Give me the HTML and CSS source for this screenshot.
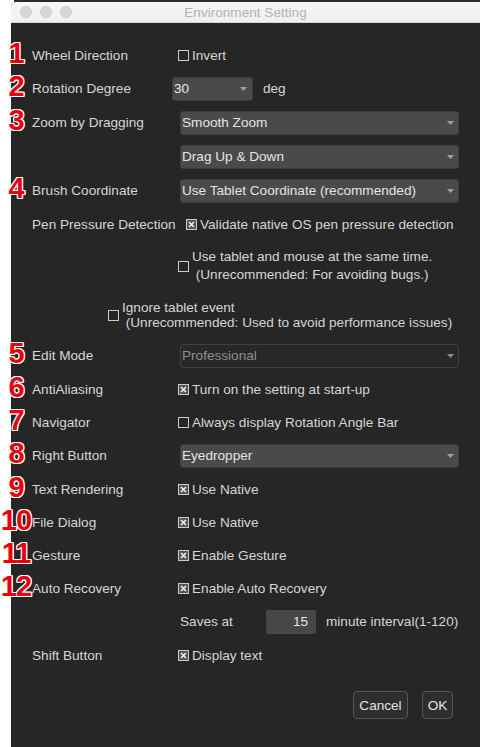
FILE: index.html
```html
<!DOCTYPE html>
<html lang="en">
  <head>
    <meta name="viewport" content="width=device-width, initial-scale=1.0">
    <link rel="stylesheet" href="styles.css">
  </head>
  <body>
    <div class="backdrop"></div>
    <div class="window">
      <div class="titlebar">
        <div class="lights"><span></span><span></span><span></span></div>
        <div class="title">Environment Setting</div>
      </div>
      <div class="content">
        <div class="row">
          <span class="badge">1</span>
          <span class="label">Wheel Direction</span>
          <span class="check"><svg width="11" height="11"><rect x="0.5" y="0.5" width="10" height="10" class="box"/></svg>Invert</span>
        </div>
        <div class="row tall">
          <span class="badge">2</span>
          <span class="label">Rotation Degree</span>
          <div class="inline">
            <div class="select small"><span>30</span><svg width="7" height="4"><path d="M0 0H7L3.5 4Z"/></svg></div>
            <span>deg</span>
          </div>
        </div>
        <div class="row tall">
          <span class="badge">3</span>
          <span class="label">Zoom by Dragging</span>
          <div class="select"><span>Smooth Zoom</span><svg width="7" height="4"><path d="M0 0H7L3.5 4Z"/></svg></div>
        </div>
        <div class="row tall">
          <span class="label"></span>
          <div class="select"><span>Drag Up &amp; Down</span><svg width="7" height="4"><path d="M0 0H7L3.5 4Z"/></svg></div>
        </div>
        <div class="row tall">
          <span class="badge">4</span>
          <span class="label">Brush Coordinate</span>
          <div class="select"><span>Use Tablet Coordinate (recommended)</span><svg width="7" height="4"><path d="M0 0H7L3.5 4Z"/></svg></div>
        </div>
        <div class="row">
          <span class="label">Pen Pressure Detection</span>
          <span class="check pen"><svg width="11" height="11"><rect x="0.5" y="0.5" width="10" height="10" class="box on"/><path d="M3 3L8 8M8 3L3 8" class="mark"/></svg>Validate native OS pen pressure detection</span>
        </div>
        <div class="row two">
          <span class="label"></span>
          <span class="check"><svg width="11" height="11"><rect x="0.5" y="0.5" width="10" height="10" class="box"/></svg><span class="lines">Use tablet and mouse at the same time.
 (Unrecommended: For avoiding bugs.)</span></span>
        </div>
        <div class="row two ignore">
          <span class="check wide"><svg width="11" height="11"><rect x="0.5" y="0.5" width="10" height="10" class="box"/></svg><span class="lines">Ignore tablet event
 (Unrecommended: Used to avoid performance issues)</span></span>
        </div>
        <div class="row tall">
          <span class="badge">5</span>
          <span class="label">Edit Mode</span>
          <div class="select disabled"><span>Professional</span><svg width="7" height="4"><path d="M0 0H7L3.5 4Z"/></svg></div>
        </div>
        <div class="row">
          <span class="badge">6</span>
          <span class="label">AntiAliasing</span>
          <span class="check"><svg width="11" height="11"><rect x="0.5" y="0.5" width="10" height="10" class="box on"/><path d="M3 3L8 8M8 3L3 8" class="mark"/></svg>Turn on the setting at start-up</span>
        </div>
        <div class="row">
          <span class="badge">7</span>
          <span class="label">Navigator</span>
          <span class="check"><svg width="11" height="11"><rect x="0.5" y="0.5" width="10" height="10" class="box"/></svg>Always display Rotation Angle Bar</span>
        </div>
        <div class="row tall">
          <span class="badge">8</span>
          <span class="label">Right Button</span>
          <div class="select"><span>Eyedropper</span><svg width="7" height="4"><path d="M0 0H7L3.5 4Z"/></svg></div>
        </div>
        <div class="row">
          <span class="badge">9</span>
          <span class="label">Text Rendering</span>
          <span class="check"><svg width="11" height="11"><rect x="0.5" y="0.5" width="10" height="10" class="box on"/><path d="M3 3L8 8M8 3L3 8" class="mark"/></svg>Use Native</span>
        </div>
        <div class="row">
          <span class="badge">10</span>
          <span class="label">File Dialog</span>
          <span class="check"><svg width="11" height="11"><rect x="0.5" y="0.5" width="10" height="10" class="box on"/><path d="M3 3L8 8M8 3L3 8" class="mark"/></svg>Use Native</span>
        </div>
        <div class="row">
          <span class="badge">11</span>
          <span class="label">Gesture</span>
          <span class="check"><svg width="11" height="11"><rect x="0.5" y="0.5" width="10" height="10" class="box on"/><path d="M3 3L8 8M8 3L3 8" class="mark"/></svg>Enable Gesture</span>
        </div>
        <div class="row">
          <span class="badge">12</span>
          <span class="label">Auto Recovery</span>
          <span class="check"><svg width="11" height="11"><rect x="0.5" y="0.5" width="10" height="10" class="box on"/><path d="M3 3L8 8M8 3L3 8" class="mark"/></svg>Enable Auto Recovery</span>
        </div>
        <div class="row tall">
          <span class="label"></span>
          <div class="inline">
            <span class="saves">Saves at</span>
            <div class="number">15</div>
            <span>minute interval(1-120)</span>
          </div>
        </div>
        <div class="row">
          <span class="label">Shift Button</span>
          <span class="check"><svg width="11" height="11"><rect x="0.5" y="0.5" width="10" height="10" class="box on"/><path d="M3 3L8 8M8 3L3 8" class="mark"/></svg>Display text</span>
        </div>
        <div class="buttons">
          <button class="btn cancel">Cancel</button>
          <button class="btn ok">OK</button>
        </div>
      </div>
    </div>
  </body>
</html>
```

FILE: styles.css
```css
body{
  margin: 0;
  background: #ffffff;
  font-family: "Liberation Sans", Arial, sans-serif;
  font-size: 13.6px;
}
.backdrop{
  height: 2px;
  margin-left: 14px;
  background: #2c2c2c;
}
.window{
  margin-left: 11px;
  height: 745px;
  background: #262626;
  border-top-left-radius: 5px;
}
.titlebar{
  box-sizing: border-box;
  height: 21px;
  display: grid;
  grid-template-columns: 1fr auto 1fr;
  align-items: center;
  background: linear-gradient(#f7f7f7, #efefef);
  border-bottom: 1px solid #d4d4d4;
  border-top-left-radius: 5px;
}
.lights{
  display: flex;
  gap: 8px;
  padding-left: 9px;
}
.lights span{
  box-sizing: border-box;
  width: 12px;
  height: 12px;
  border-radius: 50%;
  background: #d6d6d6;
  border: 1px solid #cdcdcd;
}
.title{
  color: #b3b3b3;
}
.content{
  padding: 15.5px 21px 0;
  color: #d4d6d8;
}
.row{
  position: relative;
  display: grid;
  grid-template-columns: 146px 1fr;
  align-items: center;
  height: 33px;
}
.row.tall{
  height: 34px;
}
.row.two{
  height: 51px;
}
.row.ignore{
  height: 47px;
}
.badge{
  position: absolute;
  left: -32px;
  top: -2px;
  bottom: 2px;
  width: 32px;
  display: flex;
  align-items: center;
  justify-content: center;
  font-size: 29px;
  font-weight: bold;
  letter-spacing: -1px;
  color: #e8000f;
  text-shadow: 1px 0 #fff, -1px 0 #fff, 0 1px #fff, 0 -1px #fff, 1px 1px #fff, -1px -1px #fff, 1px -1px #fff, -1px 1px #fff;
}
.check{
  display: flex;
  align-items: center;
  gap: 3px;
}
.check svg{
  flex: none;
}
.check.pen{
  margin-left: 8px;
}
.check.wide{
  grid-column: 1 / -1;
  margin-left: 76px;
}
.box{
  fill: none;
  stroke: #c9cbcd;
}
.box.on{
  fill: #555555;
}
.mark{
  stroke: #eeeeee;
  stroke-width: 1.6;
}
.lines{
  white-space: pre;
  line-height: 18px;
}
.ignore .lines{
  line-height: 15.5px;
}
.select{
  box-sizing: border-box;
  display: flex;
  align-items: center;
  justify-content: space-between;
  height: 24px;
  margin-left: 2px;
  padding: 0 4px 0 1px;
  background: #4a4a4a;
  border: 1px solid #3c3c3c;
  border-radius: 3px;
  color: #e4e4e4;
}
.select svg{
  fill: #a0a0a0;
}
.select.disabled{
  background: #282828;
  border-color: #3f3f3f;
  color: #8e8e8e;
}
.select.disabled svg{
  fill: #8a8a8a;
}
.select.small{
  width: 81px;
  margin-left: -6px;
  padding-right: 5px;
}
.inline{
  display: flex;
  align-items: center;
  gap: 10px;
}
.saves{
  width: 76px;
  margin-left: 2px;
}
.number{
  box-sizing: border-box;
  width: 50px;
  height: 24px;
  line-height: 24px;
  padding-right: 8px;
  text-align: right;
  background: #474747;
  border-radius: 2px;
  color: #e4e4e4;
}
.buttons{
  display: flex;
  justify-content: flex-end;
  gap: 14px;
  margin-top: 19.5px;
  padding-right: 6px;
}
.btn{
  box-sizing: border-box;
  height: 28px;
  padding: 0;
  background: #2e2e2e;
  border: 1px solid #575757;
  border-radius: 4px;
  color: #e4e4e4;
  font-family: "Liberation Sans", Arial, sans-serif;
  font-size: 13.6px;
}
.btn.cancel{
  width: 55px;
}
.btn.ok{
  width: 31px;
}
```
